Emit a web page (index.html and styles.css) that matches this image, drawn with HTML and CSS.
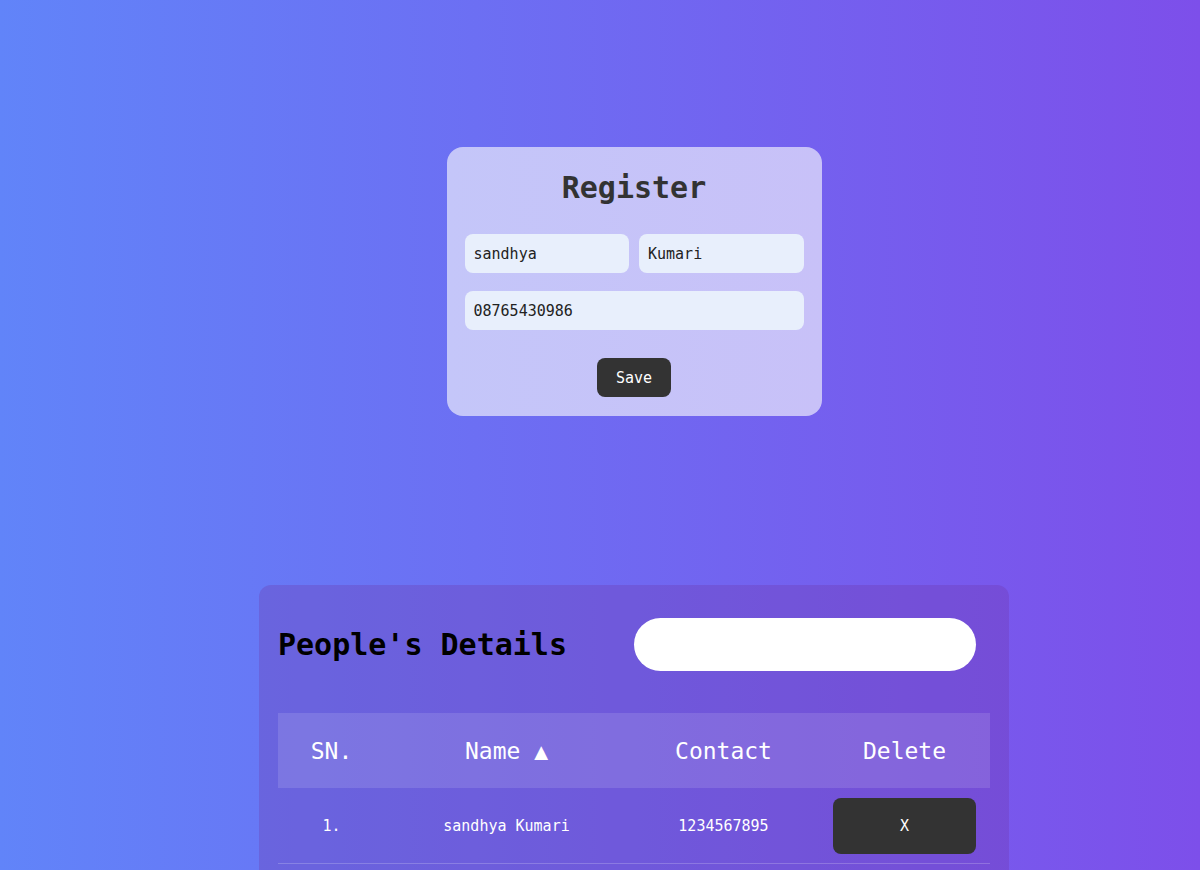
FILE: index.html
```html
<!DOCTYPE html>
<html lang="en">
<head>
<meta charset="utf-8">
<title>Register</title>
<link rel="stylesheet" href="styles.css">
</head>
<body>
<main class="page">
  <section class="register">
    <h1 class="register-title">Register</h1>
    <form class="register-form">
      <div class="name-row">
        <input class="field" type="text" value="sandhya">
        <input class="field" type="text" value="Kumari">
      </div>
      <input class="field field-wide" type="text" value="08765430986">
      <div class="actions">
        <button class="save-btn" type="button">Save</button>
      </div>
    </form>
  </section>

  <section class="details">
    <div class="details-head">
      <h2 class="details-title">People's Details</h2>
      <input class="search" type="text">
    </div>
    <table class="people">
      <colgroup>
        <col class="col-sn">
        <col class="col-name">
        <col class="col-contact">
        <col class="col-delete">
      </colgroup>
      <thead>
        <tr>
          <th>SN.</th>
          <th>Name ▲</th>
          <th>Contact</th>
          <th>Delete</th>
        </tr>
      </thead>
      <tbody>
        <tr>
          <td>1.</td>
          <td>sandhya Kumari</td>
          <td>1234567895</td>
          <td><button class="delete-btn" type="button">X</button></td>
        </tr>
      </tbody>
    </table>
  </section>
</main>
</body>
</html>
```

FILE: styles.css
```css
html {
  scrollbar-width: none;
}
html::-webkit-scrollbar {
  display: none;
}
body {
  margin: 0;
  min-height: 100vh;
  background: linear-gradient(to right, #6184f9, #7d4fea);
  font-family: "DejaVu Sans Mono", "Liberation Mono", monospace;
}
.page {
  display: flex;
  flex-direction: column;
  align-items: center;
  padding-left: 68px;
  padding-top: 147px;
}
.register {
  width: 375px;
  box-sizing: border-box;
  padding: 18px 18px 19px;
  border-radius: 16px;
  background: linear-gradient(to right, #c4c6f9, #c8c1f8);
}
.register-title {
  margin: 5px 0 29px;
  font-size: 30px;
  line-height: 35px;
  font-weight: bold;
  color: #333;
  text-align: center;
}
.register-form {
  display: flex;
  flex-direction: column;
  gap: 18px;
  margin: 0;
}
.name-row {
  display: grid;
  grid-template-columns: 1fr 1fr;
  gap: 10px;
}
.field {
  height: 39px;
  box-sizing: border-box;
  border: none;
  border-radius: 8px;
  background: #e8effc;
  padding: 0 9px;
  font-family: inherit;
  font-size: 15px;
  color: #222;
  min-width: 0;
  outline: none;
}
.actions {
  display: flex;
  justify-content: center;
  margin-top: 10px;
}
.save-btn {
  width: 74px;
  height: 39px;
  border: none;
  border-radius: 8px;
  background: #333;
  color: #fff;
  font-family: inherit;
  font-size: 15px;
}
.details {
  margin-top: 169px;
  width: 750px;
  box-sizing: border-box;
  padding: 33px 19px 40px;
  border-radius: 12px;
  background: rgba(110, 50, 160, 0.28);
}
.details-head {
  display: flex;
  align-items: center;
  justify-content: space-between;
  margin-bottom: 42px;
}
.details-title {
  margin: 0;
  font-size: 30px;
  font-weight: bold;
  color: #000;
}
.search {
  width: 342px;
  height: 53px;
  box-sizing: border-box;
  margin-right: 14px;
  border: none;
  border-radius: 27px;
  background: #fff;
  outline: none;
}
.people {
  width: 712px;
  border-collapse: collapse;
  table-layout: fixed;
  color: #fff;
}
.col-sn { width: 107px; }
.col-name { width: 243px; }
.col-contact { width: 191px; }
.col-delete { width: 171px; }
.people thead tr {
  background: rgba(255, 255, 255, 0.12);
}
.people th {
  height: 75px;
  padding: 0;
  font-size: 23px;
  font-weight: normal;
  text-align: center;
}
.people td {
  height: 75px;
  padding: 0;
  font-size: 15px;
  text-align: center;
  border-bottom: 1px solid rgba(255, 255, 255, 0.2);
}
.delete-btn {
  width: 143px;
  height: 56px;
  border: none;
  border-radius: 8px;
  background: #333;
  color: #fff;
  font-family: inherit;
  font-size: 15px;
}
```
